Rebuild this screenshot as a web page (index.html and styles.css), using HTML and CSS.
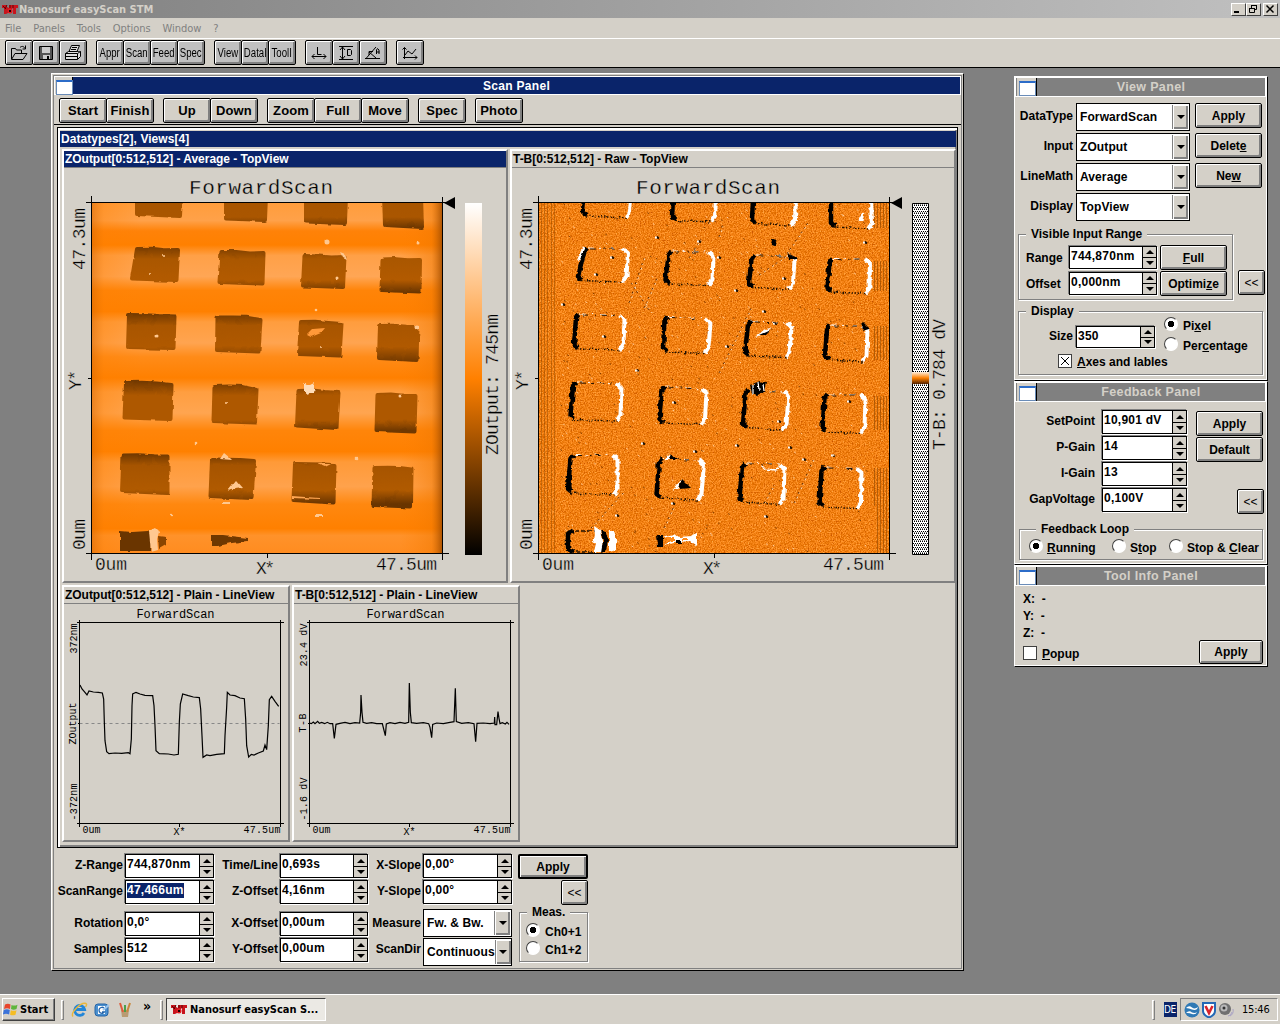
FILE: index.html
```html
<!DOCTYPE html>
<html lang="en">
<head>
<meta charset="utf-8">
<title>Nanosurf easyScan STM</title>
<link rel="stylesheet" href="styles.css">
</head>
<body>
<header class="titlebar">
  <svg class="logo" width="17" height="11" viewBox="0 0 17 11"><use href="#nst"/></svg>
  <span class="app-name">Nanosurf easyScan STM</span>
  <span class="winbtns">
    <i class="wb"><svg width="12" height="10"><path d="M2 8h5" stroke="#000" stroke-width="2"/></svg></i><i class="wb"><svg width="12" height="10"><path d="M4.500 4V1.500h5v4H8M2.500 4.500h5v4h-5zM4 1.500h6M2 4.500h6" fill="none" stroke="#000"/></svg></i><i class="wb close"><svg width="12" height="10"><path d="M2.500 1.500l7 7M9.500 1.500l-7 7" stroke="#000" stroke-width="1.500"/></svg></i>
  </span>
</header>
<nav class="menubar"><span>File</span><span>Panels</span><span>Tools</span><span>Options</span><span>Window</span><span>?</span></nav>
<div class="toolbar">
  <div class="tgroup">
    <button class="tb"><svg width="20" height="18" fill="none" stroke="#000"><path d="M2.500 15V4.500h4l1 1.500h5v3M2.500 15.500L6 9.500h12l-4 6zM11 3.500c2-2 4-1 5 1M16.500 1.500v3.500h-3"/></svg></button>
    <button class="tb"><svg width="20" height="18"><path d="M3.500 2.500h13v13h-13z" fill="#555" stroke="#000"/><path d="M6 3h8v6H6zM7 11h7v4H7z" fill="#ccc"/><path d="M11 12h2v3h-2z"/></svg></button>
    <button class="tb"><svg width="20" height="18" fill="#ddd" stroke="#000"><path d="M6 7.500L8.500 1.500h8L14 7.500M9 3.500h5M8 5.500h5"/><path d="M2.500 9.500l3-2h12v5l-3 3h-12z"/><path d="M2.500 9.500h12l3-2M14.500 9.500v6M3 12.500h11"/></svg></button>
  </div>
  <div class="tgroup"><button class="tb"><span>Appr</span></button><button class="tb"><span>Scan</span></button><button class="tb"><span>Feed</span></button><button class="tb"><span>Spec</span></button></div>
  <div class="tgroup"><button class="tb"><span>View</span></button><button class="tb"><span>DataI</span></button><button class="tb"><span>ToolI</span></button></div>
  <div class="tgroup">
    <button class="tb"><svg width="20" height="18" fill="none" stroke="#000"><path d="M8.500 3v7.500h4M3 12.500h5M12 12.500h5M5.500 10L3 12.500 5.500 15M14.500 10l2.500 2.500-2.500 2.500M8 12.500h5"/></svg></button>
    <button class="tb"><svg width="20" height="18" fill="none" stroke="#000"><path d="M3 2.500h14M3 15.500h14M6.500 3v12M4 6l2.500-3L9 6M4 12l2.500 3L9 12M11.500 5.500h3l1 1v4l-1 1h-3z"/></svg></button>
    <button class="tb"><svg width="20" height="18" fill="none" stroke="#000"><path d="M2 14.500h15M3 14.500L13 3M6 8l7 6M6 11V7.500h4M13.500 10V6l1-1.500 1.500 1.500v4M13.500 8h3"/></svg></button>
  </div>
  <div class="tgroup"><button class="tb"><svg width="20" height="18" fill="none" stroke="#000"><path d="M4.500 15V3.500M2.500 5.500l2-2 2 2M3 13.500h14M15 11.500l2 2-2 2M5 11l3-4 4 3 4-5"/></svg></button></div>
</div>

<main class="desktop">
  <section class="win scan-panel">
    <div class="wtitle active"><i class="sys"></i><span>Scan Panel</span></div>
    <div class="wtools">
      <div class="tgroup"><button class="sb">Start</button><button class="sb">Finish</button></div>
      <div class="tgroup"><button class="sb">Up</button><button class="sb">Down</button></div>
      <div class="tgroup"><button class="sb">Zoom</button><button class="sb">Full</button><button class="sb">Move</button></div>
      <div class="tgroup"><button class="sb">Spec</button></div>
      <div class="tgroup"><button class="sb">Photo</button></div>
    </div>
    <div class="datawin">
      <div class="dtitle">Datatypes[2], Views[4]</div>
      <div class="views">
        <article class="view">
          <h2 class="vhead active">ZOutput[0:512,512] - Average - TopView</h2>
          <svg class="plot big" viewBox="-28 -35 441 412" width="441" height="412">
            <defs>
              <linearGradient id="bands" gradientUnits="userSpaceOnUse" x1="0" y1="0" x2="0" y2="350">
                <stop offset="0" stop-color="#ff9d3c"/><stop offset=".05" stop-color="#ffa149"/><stop offset=".08" stop-color="#ff8208"/><stop offset=".12" stop-color="#ff8000"/><stop offset=".15" stop-color="#ffa047"/><stop offset=".21" stop-color="#ffa655"/><stop offset=".25" stop-color="#ff8408"/><stop offset=".31" stop-color="#ff8000"/><stop offset=".34" stop-color="#ff9d3e"/><stop offset=".4" stop-color="#ffa450"/><stop offset=".44" stop-color="#ff8b18"/><stop offset=".5" stop-color="#ff8000"/><stop offset=".54" stop-color="#ff9e40"/><stop offset=".6" stop-color="#ffa550"/><stop offset=".65" stop-color="#ff850a"/><stop offset=".71" stop-color="#ff8000"/><stop offset=".74" stop-color="#ff9a38"/><stop offset=".81" stop-color="#ffa24c"/><stop offset=".86" stop-color="#ff8810"/><stop offset=".93" stop-color="#ff8000"/><stop offset=".95" stop-color="#ff922a"/><stop offset="1" stop-color="#ff8c20"/>
              </linearGradient>
              <linearGradient id="pits" gradientUnits="userSpaceOnUse" x1="0" y1="0" x2="0" y2="350">
                <stop offset="0" stop-color="#a85500"/><stop offset=".04" stop-color="#aa5600"/><stop offset=".07" stop-color="#703800"/><stop offset=".13" stop-color="#804000"/><stop offset=".16" stop-color="#aa5700"/><stop offset=".22" stop-color="#b25a00"/><stop offset=".255" stop-color="#6c3600"/><stop offset=".315" stop-color="#703800"/><stop offset=".35" stop-color="#a85500"/><stop offset=".41" stop-color="#b05900"/><stop offset=".45" stop-color="#783c00"/><stop offset=".51" stop-color="#733900"/><stop offset=".55" stop-color="#ae5800"/><stop offset=".62" stop-color="#ae5800"/><stop offset=".65" stop-color="#703800"/><stop offset=".715" stop-color="#6e3700"/><stop offset=".75" stop-color="#a65400"/><stop offset=".82" stop-color="#b05a00"/><stop offset=".86" stop-color="#693400"/><stop offset="1" stop-color="#703800"/>
              </linearGradient>
              <linearGradient id="edge" x2="1" y2="0"><stop offset="0" stop-color="#d86800" stop-opacity=".55"/><stop offset=".035" stop-color="#ff8000" stop-opacity=".3"/><stop offset=".14" stop-color="#ff8000" stop-opacity="0"/><stop offset=".88" stop-color="#ff8000" stop-opacity="0"/><stop offset=".97" stop-color="#f07800" stop-opacity=".45"/><stop offset="1" stop-color="#a85000" stop-opacity=".9"/></linearGradient>
              <linearGradient id="scale" x2="0" y2="1"><stop offset="0" stop-color="#fff"/><stop offset=".5" stop-color="#ff8000"/><stop offset="1" stop-color="#000"/></linearGradient>
              <filter id="soft" x="-10%" y="-10%" width="120%" height="120%" color-interpolation-filters="sRGB"><feTurbulence type="fractalNoise" baseFrequency=".12" numOctaves="2" seed="3"/><feDisplacementMap in="SourceGraphic" scale="3" xChannelSelector="R" yChannelSelector="G"/><feGaussianBlur stdDeviation=".65"/></filter>
              <filter id="rough" x="-5%" y="-5%" width="110%" height="110%" color-interpolation-filters="sRGB"><feTurbulence type="fractalNoise" baseFrequency=".2" numOctaves="2" seed="4"/><feDisplacementMap in="SourceGraphic" scale="4" xChannelSelector="R" yChannelSelector="G"/></filter>
              <clipPath id="area"><path d="M0 0h350v350H0z"/></clipPath>
            </defs>
            <g clip-path="url(#area)">
              <path d="M0 0h350v350H0z" fill="url(#bands)"/>
              <path d="M0 0h350v350H0z" fill="url(#edge)"/>
              <g id="heightmap" filter="url(#soft)"></g>
              <g fill="#ffc890" filter="url(#soft)">
                <circle cx="235" cy="39" r="2.500"/><circle cx="326" cy="40" r="1.500"/><path d="M248 49l5 2 2 6-4-2z"/><path d="M215 132l6-6 12-1-4 5-10 4z" fill="#ff9838"/>
                <circle cx="325" cy="124" r="2.500"/><path d="M212 180l4 3 6-3-2 5 4 3-6 1-2 3-4-3z" fill="#ffdcb8"/><path d="M215 182h7v8h-7z" fill="#ffdcb8"/>
                <path d="M128 256l4-6 6 5 2 2zM135 288l9-11 7 8-8 1z"/><path d="M131 299h7v2h-7zM224 312h7v2h-7z"/><path d="M57 328l6-3 4 4-2 7 1 11-7 2z"/><path d="M225 261h14l-6 3zM200 293l27 2v1l-27-1z" fill="#ffa550"/>
                <circle cx="72" cy="53" r="1"/><circle cx="57" cy="71" r="1"/><circle cx="65" cy="133" r="1.500"/><circle cx="245" cy="75" r="1.500"/><circle cx="104" cy="240" r="1.300"/><circle cx="79" cy="312" r="1.300"/><circle cx="265" cy="256" r="1.300"/><circle cx="229" cy="144" r="1"/><circle cx="224" cy="107" r="1.300"/><circle cx="134" cy="200" r="1"/><circle cx="308" cy="193" r="1.500"/>
              </g>
            </g>
            <path d="M373 0h17v352h-17z" fill="url(#scale)"/>
            <g class="axes"><path d="M-6-.5h362.500M-.5-7v364M350.500-6v363M-6 350.500h363M175.500 350v5M-4 175.500h4"/></g>
            <path d="M352 0l11-6v12z"/>
            <g class="stroke-lg"><text x="97" y="-9" textLength="144" class="cap">ForwardScan</text><text x="3" y="367" textLength="32">0um</text><text x="164" y="371" textLength="19">X*</text><text x="284" y="367" textLength="61">47.5um</text><text transform="translate(-7 67) rotate(-90)" textLength="62">47.3um</text><text transform="translate(-7 347) rotate(-90)" textLength="31">0um</text><text transform="translate(-11 187) rotate(-90)" textLength="20">Y*</text><text transform="translate(406 252) rotate(-90)" textLength="141">ZOutput: 745nm</text></g>
          </svg>
        </article>
        <article class="view">
          <h2 class="vhead">T-B[0:512,512] - Raw - TopView</h2>
          <svg class="plot big" viewBox="-27 -35 441 412" width="441" height="412">
            <defs>
              <filter id="grain" x="0" y="0" width="100%" height="100%" color-interpolation-filters="sRGB"><feTurbulence type="fractalNoise" baseFrequency=".75" numOctaves="2" seed="9"/><feColorMatrix values=".45 0 0 0 .72  .5 0 0 0 .25  .6 0 0 0 -.23  0 0 0 0 1"/></filter>
              <pattern id="dots" width="4" height="4" patternUnits="userSpaceOnUse"><path d="M0 0h4v4H0z" fill="#fff"/><path d="M0 0h1v1H0zM2 0h1v1H2zM1 2h1v1H1zM3 2h1v1H3zM1 1h1v.5H1zM3 1h1v.5H3z"/></pattern>
              <linearGradient id="mid" x2="0" y2="1"><stop offset="0" stop-color="#fff0e0"/><stop offset=".5" stop-color="#ff8000"/><stop offset="1" stop-color="#502000"/></linearGradient>
            </defs>
            <g clip-path="url(#area)">
              <path d="M0 0h350v350H0z" filter="url(#grain)"/>
              <g stroke="#8a4600" stroke-opacity=".6"><path d="M2.500 0v350M5.500 0v350M8.500 0v350M12.500 0v350M15.500 0v350" stroke-opacity=".45"/><path d="M335.500 0v25M338.500 0v25M341.500 0v25M344.500 0v25M347.500 0v25M335.500 58v30M338.500 58v30M341.500 58v30M344.500 58v30M347.500 58v30M335.500 123v34M338.500 123v34M341.500 123v34M344.500 123v34M347.500 123v34M335.500 193v34M338.500 193v34M341.500 193v34M344.500 193v34M347.500 193v34M335.500 265v38M338.500 265v85M341.500 265v85M344.500 265v85M347.500 265v85"/></g>
              <g id="debris"></g>
              <g id="slopemap" filter="url(#rough)"></g>
            </g>
            <path d="M373.500.5h16v351h-16z" fill="url(#dots)" stroke="#000"/><path d="M373 169h17v12h-17z" fill="url(#mid)"/>
            <g class="axes"><path d="M-6-.5h362.500M-.5-7v364M350.500-6v363M-6 350.500h363M175.500 350v5M-4 175.500h4"/></g>
            <path d="M352 0l11-6v12z"/>
            <g class="stroke-lg"><text x="97" y="-9" textLength="144" class="cap">ForwardScan</text><text x="3" y="367" textLength="32">0um</text><text x="164" y="371" textLength="19">X*</text><text x="284" y="367" textLength="61">47.5um</text><text transform="translate(-7 67) rotate(-90)" textLength="62">47.3um</text><text transform="translate(-7 347) rotate(-90)" textLength="31">0um</text><text transform="translate(-11 187) rotate(-90)" textLength="20">Y*</text><text transform="translate(406 247) rotate(-90)" textLength="131">T-B: 0.784 dV</text></g>
          </svg>
        </article>
      </div>
      <div class="views lines">
        <article class="view small">
          <h2 class="vhead">ZOutput[0:512,512] - Plain - LineView</h2>
          <svg class="plot" viewBox="-15.5 -18.500 224 235" width="224" height="235">
            <path d="M0 101H200" stroke="#888" stroke-dasharray="3 3"/>
            <g class="axes"><path d="M-3 0H204M0-3V204M201-3V204M-3 201H204M100 201v3M-2 101h2"/></g>
            <polyline class="trace" transform="translate(-29.500 -43.500) scale(.33333)" points="90,318 96,330 103,338 111,348 117,336 130,339 145,340 157,342 161,360 163,430 165,485 170,518 177,524 195,522 215,523 235,521 240,524 244,480 246,380 248,345 258,340 270,345 285,349 308,350 312,380 315,440 318,515 328,524 355,525 372,528 385,526 388,430 391,375 398,345 415,350 430,354 448,356 452,390 456,470 459,535 470,528 480,530 500,526 523,524 525,470 530,385 532,340 540,348 555,350 570,357 583,359 587,420 590,500 596,534 604,526 612,528 625,522 640,516 645,498 650,512 655,440 658,362 665,352 675,367 686,382"/>
            <g class="stroke-sm"><text x="57" y="-5" textLength="78">ForwardScan</text><text x="3" y="210" textLength="18">0um</text><text x="94" y="212" textLength="12">X*</text><text x="164" y="210" textLength="37">47.5um</text><text transform="translate(-3 31) rotate(-90)" textLength="30">372nm</text><text transform="translate(-4 122) rotate(-90)" textLength="42">ZOutput</text><text transform="translate(-3 198) rotate(-90)" textLength="37">-372nm</text></g>
          </svg>
        </article>
        <article class="view small">
          <h2 class="vhead">T-B[0:512,512] - Plain - LineView</h2>
          <svg class="plot" viewBox="-15.5 -18.500 224 235" width="224" height="235">
            <g class="axes"><path d="M-3 0H204M0-3V204M201-3V204M-3 201H204M100 201v3M-2 101h2"/></g>
            <polyline class="trace" transform="translate(-259.500 -43.500) scale(.33333)" points="778,432 784,434 790,429 795,434 803,427 808,433 815,430 824,434 832,430 840,434 848,434 853,478 858,436 870,433 885,430 900,434 915,431 929,432 932,400 933,348 936,400 939,430 950,433 965,431 980,434 997,434 1001,450 1006,470 1009,435 1020,431 1035,434 1050,430 1065,433 1076,430 1078,312 1081,400 1084,431 1100,433 1120,431 1136,434 1140,445 1145,476 1148,436 1160,432 1180,434 1200,430 1212,428 1216,328 1219,428 1235,433 1255,431 1272,434 1277,488 1281,433 1300,432 1320,434 1333,432 1334,414 1335,437 1340,437 1344,398 1347,418 1350,434 1357,431 1366,435 1371,430 1377,436"/>
            <g class="stroke-sm"><text x="57" y="-5" textLength="78">ForwardScan</text><text x="3" y="210" textLength="18">0um</text><text x="94" y="212" textLength="12">X*</text><text x="164" y="210" textLength="37">47.5um</text><text transform="translate(-3 44) rotate(-90)" textLength="43">23.4 dV</text><text transform="translate(-4 110) rotate(-90)" textLength="19">T-B</text><text transform="translate(-3 198) rotate(-90)" textLength="43">-1.6 dV</text></g>
          </svg>
        </article>
      </div>
    </div>
    <form class="scan-form">
      <label>Z-Range</label><span class="field"><b>744,870nm</b><i class="spin"></i></span>
      <label>Time/Line</label><span class="field"><b>0,693s</b><i class="spin"></i></span>
      <label>X-Slope</label><span class="field"><b>0,00°</b><i class="spin"></i></span>
      <button type="button" class="pb default">Apply</button>
      <label>ScanRange</label><span class="field"><b><mark>47,466um</mark></b><i class="spin"></i></span>
      <label>Z-Offset</label><span class="field"><b>4,16nm</b><i class="spin"></i></span>
      <label>Y-Slope</label><span class="field"><b>0,00°</b><i class="spin"></i></span>
      <button type="button" class="pb less">&lt;&lt;</button>
      <label>Rotation</label><span class="field"><b>0,0°</b><i class="spin"></i></span>
      <label>X-Offset</label><span class="field"><b>0,00um</b><i class="spin"></i></span>
      <label>Measure</label><span class="combo raised"><b>Fw. &amp; Bw.</b><i></i></span>
      <fieldset class="meas"><legend>Meas.</legend><span class="radio on">Ch0+1</span><span class="radio">Ch1+2</span></fieldset>
      <label>Samples</label><span class="field"><b>512</b><i class="spin"></i></span>
      <label>Y-Offset</label><span class="field"><b>0,00um</b><i class="spin"></i></span>
      <label>ScanDir</label><span class="combo"><b>Continuous</b><i></i></span>
    </form>
  </section>

  <section class="win side view-panel">
    <div class="wtitle"><i class="sys"></i><span>View Panel</span></div>
    <div class="vp-grid">
      <label>DataType</label><span class="combo"><b>ForwardScan</b><i></i></span><button class="pb">Apply</button>
      <label>Input</label><span class="combo"><b>ZOutput</b><i></i></span><button class="pb">Delet<u>e</u></button>
      <label>LineMath</label><span class="combo"><b>Average</b><i></i></span><button class="pb">Ne<u>w</u></button>
      <label>Display</label><span class="combo"><b>TopView</b><i></i></span>
    </div>
    <div class="vp-range">
      <fieldset class="range"><legend>Visible Input Range</legend>
        <label>Range</label><span class="field"><b>744,870nm</b><i class="spin"></i></span><button class="pb"><u>F</u>ull</button>
        <label>Offset</label><span class="field"><b>0,000nm</b><i class="spin"></i></span><button class="pb">Optimi<u>z</u>e</button>
      </fieldset>
      <button class="pb less">&lt;&lt;</button>
    </div>
    <fieldset class="disp"><legend>Display</legend>
      <label>Size</label><span class="field"><b>350</b><i class="spin"></i></span>
      <div class="radios"><span class="radio on">Pi<u>x</u>el</span><span class="radio">Per<u>c</u>entage</span></div>
      <span class="check on"><u>A</u>xes and lables</span>
    </fieldset>
  </section>

  <section class="win side feedback-panel">
    <div class="wtitle"><i class="sys"></i><span>Feedback Panel</span></div>
    <div class="fb-grid">
      <label>SetPoint</label><span class="field"><b>10,901 dV</b><i class="spin"></i></span><button class="pb">Apply</button>
      <label>P-Gain</label><span class="field"><b>14</b><i class="spin"></i></span><button class="pb">Default</button>
      <label>I-Gain</label><span class="field"><b>13</b><i class="spin"></i></span><span></span>
      <label>GapVoltage</label><span class="field"><b>0,100V</b><i class="spin"></i></span><button class="pb less">&lt;&lt;</button>
    </div>
    <fieldset class="loop"><legend>Feedback Loop</legend><span class="radio on"><u>R</u>unning</span><span class="radio">S<u>t</u>op</span><span class="radio">Stop &amp; <u>C</u>lear</span></fieldset>
  </section>

  <section class="win side tool-panel">
    <div class="wtitle"><i class="sys"></i><span>Tool Info Panel</span></div>
    <div class="ti">
      <div class="coords"><div>X:&nbsp; -</div><div>Y:&nbsp; -</div><div>Z:&nbsp; -</div></div>
      <div class="ti-foot"><span class="check"><u>P</u>opup</span><button class="pb">Apply</button></div>
    </div>
  </section>
</main>

<footer class="taskbar">
  <button class="start"><svg width="16" height="15" viewBox="0 0 16 15"><path d="M2 2.500q3-1.500 5.500 0L7 7Q4 5.500 1 7z" fill="#e8452c"/><path d="M8.500 3q3 1.300 6-.3L13.500 7q-3 1.300-5.500 0z" fill="#5db53c"/><path d="M.8 8Q4 6.500 6.800 8l-.7 4.500Q3 11-.1 12.500z" fill="#3b73d9"/><path d="M7.800 8.200q3 1.300 5.700 0l-1 4.500q-3 1.300-5.400 0z" fill="#f5bd24"/></svg>Start</button>
  <i class="sep"></i>
  <div class="quick">
    <svg width="17" height="16" viewBox="0 0 17 16"><path d="M13 11a5 5 0 1 1 .6-3.500H4" fill="none" stroke="#2386d8" stroke-width="2.800"/><path d="M2 14.500C-1 11 10-.5 15 1.500c1.500 1 0 2.500-.5 3.500" fill="none" stroke="#e9b63a" stroke-width="1.400"/></svg>
    <svg width="17" height="16" viewBox="0 0 17 16"><rect x="1" y="2" width="13" height="12" rx="3" fill="#4b90cf" stroke="#2564a8"/><path d="M4 4h7v8H4z" fill="#fff"/><path d="M10 6a3 3 0 1 0 .5 4H8" fill="none" stroke="#2465ac" stroke-width="1.300"/><path d="M9 8l6-5" stroke="#9cc6ee" stroke-width="2"/></svg>
    <svg width="17" height="16" viewBox="0 0 17 16"><path d="M4 8h8l-1 7H5z" fill="#b99b72"/><path d="M3 1l3 9" stroke="#e05a3a" stroke-width="2"/><path d="M8 3v7" stroke="#4aa04a" stroke-width="2"/><path d="M13 1l-3 9" stroke="#c9873c" stroke-width="2"/></svg>
  </div>
  <span class="more">»</span>
  <i class="sep s2"></i>
  <div class="task"><svg width="17" height="11" viewBox="0 0 17 11"><use href="#nst"/></svg>Nanosurf easyScan S...</div>
  <i class="sep s3"></i>
  <span class="lang">DE</span>
  <div class="tray">
    <svg width="16" height="16"><circle cx="8" cy="8" r="7.500" fill="#2f79b5"/><path d="M2 6q3-3 6-.5 3 2 6-.5-1 4-6 2.500Q5 6 2 6zM2 11q3-3 6-.5 3 1 5-.5-1 3-5 2-3-1.500-6-1z" fill="#fff"/></svg>
    <svg width="14" height="16"><path d="M1 1h12v8q0 4-6 6.500Q1 13 1 9z" fill="#fff" stroke="#2468b5" stroke-width="2"/><path d="M3.500 4L7 11l3.500-7" fill="none" stroke="#d8242c" stroke-width="2.600"/></svg>
    <svg width="17" height="16"><circle cx="7" cy="7" r="6" fill="#707070"/><circle cx="6" cy="6" r="3.500" fill="#b8b8b8"/><circle cx="6" cy="6" r="1.500" fill="#333"/><path d="M12 14q4-2 3-7M10 14q3 0 4-4" fill="none" stroke="#a9a3c4"/></svg>
    <span>15:46</span>
  </div>
</footer>
<svg class="defs" width="0" height="0"><defs><g id="nst"><path d="M0 1h5v2l2 1V1h9v3h-2v6h-3V4l-2 2v3H6L4 10H2V4H0z" fill="#c8141c"/><path d="M1 2l3 3M5 1l-2 4M11 1v3M8 1v3" stroke="#400" stroke-width=".8"/><circle cx="8" cy="7" r="2.500" fill="#e01c22"/><path d="M7 6h2v2H7z" fill="#200"/></g></defs></svg>
<script src="scans.js"></script>
</body>
</html>
```
FILE: styles.css
```css
* { box-sizing: border-box; }
body { margin: 0; width: 1280px; height: 1024px; overflow: hidden; display: flex; flex-direction: column; background: #808080; color: #000; font: bold 12px "Liberation Sans", Arial, sans-serif; }
button { font: inherit; color: inherit; padding: 0; margin: 0; border-radius: 0; white-space: nowrap; }
i { font-style: normal; display: block; flex: none; }
u { text-underline-offset: 1px; }
fieldset { margin: 0; padding: 0; min-width: 0; border: 1px solid #808080; box-shadow: 1px 1px #fff, inset 1px 1px #fff; }
legend { padding: 0 5px; margin-left: 7px; line-height: 13px; background: #d4d0c8; }
.defs { position: absolute; }

/* application frame */
.titlebar { height: 18px; flex: none; display: flex; align-items: center; padding: 0 2px; background: linear-gradient(90deg, #808080, #c0c0c0); }
.app-name { font: bold 11px "DejaVu Sans Condensed", "DejaVu Sans", sans-serif; color: #d4d0c8; letter-spacing: .02px; }
.winbtns { margin-left: auto; display: flex; }
.wb { width: 15px; height: 13px; background: #d4d0c8; border: 1px solid; border-color: #fff #404040 #404040 #fff; }
.wb svg { display: block; }
.wb.close { margin-left: 2px; }
.menubar { height: 20px; flex: none; display: flex; gap: 12px; padding: 0 5px; align-items: center; background: #d4d0c8; color: #808080; font: 11px "DejaVu Sans Condensed", "DejaVu Sans", sans-serif; letter-spacing: -.05px; }
.toolbar { height: 30px; flex: none; display: flex; gap: 9px; padding: 1px 5px 0; background: #d4d0c8; border-top: 1px solid #fff; border-bottom: 1px solid #000; }
.tgroup { display: flex; }
.tb { width: 28px; height: 25px; margin-right: -1px; display: grid; place-items: center; background: #c0c0c0; border: 1px solid #000; box-shadow: inset 1px 1px #fff, inset -2px -2px #808080; font: 12px "Liberation Sans", sans-serif; border-radius: 2px; }
.tb span { transform: scaleX(.8); margin: 0 -4px; letter-spacing: 0; }
.tb:last-child, .sb:last-child { margin-right: 0; }

/* windows */
.desktop { position: relative; flex: 1; }
.win { position: absolute; background: #d4d0c8; display: flex; flex-direction: column; }
.scan-panel { left: 51px; top: 5px; width: 913px; height: 898px; border: 1px solid; border-color: #fff #000 #000 #fff; box-shadow: inset 1px 1px #d4d0c8, inset -1px -1px #d4d0c8, inset 2px 2px #808080, inset -2px -2px #808080; padding: 2px; }
.wtitle { display: flex; flex: none; height: 20px; border: 1px solid #fff; background: #808080; color: #d4d0c8; font-size: 12.500px; letter-spacing: .35px; align-items: center; }
.wtitle span { flex: 1; text-align: center; }
.wtitle.active { height: 19px; background: #0a246a; color: #fff; font-size: 12px; letter-spacing: .3px; }
.sys { width: 18px; align-self: stretch; background: #d4d0c8; border-right: 1px solid #000; padding: 3px 1px 1px 1px; }
.sys::before { content: ""; display: block; width: 15px; height: 12px; background: #fff; border: 1px solid #6a8cb8; border-top: 2px solid #2c6cc8; }
.wtools { height: 30px; flex: none; display: flex; gap: 9px; padding: 3px 5px 0; border-bottom: 1px solid #000; }
.sb { width: 48px; height: 25px; margin-right: -1px; background: #d4d0c8; border: 1px solid #000; box-shadow: inset 1px 1px #fff, inset -2px -2px #808080; font-size: 13px; letter-spacing: .1px; border-radius: 2px; }
.datawin { margin: 2px 3px 0; height: 721px; flex: none; border: 1px solid #000; box-shadow: inset 2px 2px #fff, inset -2px -2px #808080; padding: 3px 1px 3px 2px; }
.dtitle { height: 16px; line-height: 16px; background: #0a246a; color: #fff; padding-left: 1px; letter-spacing: .05px; }
.views { display: flex; gap: 2px; padding: 2px 0 0 2px; }
.view { width: 446px; height: 434px; background: #d4d0c8; border: 2px solid; border-color: #fff #808080 #808080 #fff; }
.lines .view { width: 228px; height: 257px; }
.lines { padding-top: 2px; }
.vhead { margin: 0; height: 17px; line-height: 16px; font-size: 12px; padding-left: 1px; border-bottom: 1px solid #808080; white-space: nowrap; letter-spacing: -.03px; }
.vhead.active { background: #0a246a; color: #fff; }
.plot { display: block; }
.axes { stroke: #000; fill: none; shape-rendering: crispEdges; }
.trace { fill: none; stroke: #000; stroke-width: 1.200px; vector-effect: non-scaling-stroke; }
.stroke-lg { font: 18px "Liberation Mono", monospace; }
.stroke-lg text, .stroke-sm text { white-space: pre; }
.stroke-lg .cap { font-size: 21px; }
.stroke-lg text { stroke: #d4d0c8; stroke-width: .3px; }
.stroke-sm { font: 10px "Liberation Mono", monospace; }
.stroke-sm text:first-child { font-size: 12px; }

/* controls */
label { text-align: right; padding-right: 3px; line-height: 23px; white-space: nowrap; display: flex; justify-content: flex-end; }
.field { display: flex; height: 24px; background: #fff; border: 1px solid #000; box-shadow: -1px -1px #808080, 1px 1px #fff; }
.field b { flex: 1; padding: 2px 0 0 1px; line-height: 15px; white-space: nowrap; letter-spacing: .25px; }
mark { background: #0a246a; color: #fff; display: inline-block; }
.spin { width: 14px; border-left: 1px solid #000; background: linear-gradient(#000, #000) center / 100% 1px no-repeat, #d4d0c8; display: flex; flex-direction: column; justify-content: space-around; align-items: center; }
.spin::before, .spin::after { content: ""; border: 4px solid transparent; border-top: 0; border-bottom: 4px solid #000; }
.spin::after { border-bottom: 0; border-top: 4px solid #000; }
.combo { display: flex; height: 28px; background: #fff; border: 1px solid #000; padding: 1px; }
.combo b { flex: 1; padding-left: 2px; line-height: 25px; white-space: nowrap; letter-spacing: .1px; }
.combo i { width: 16px; background: #d4d0c8; box-shadow: inset 1px 1px #fff, inset -2px -2px #808080; border-left: 1px solid #808080; display: grid; place-items: center; }
.combo i::before { content: ""; border: 4px solid transparent; border-bottom: 0; border-top-color: #000; }
.pb { height: 25px; background: #d4d0c8; border: 1px solid #000; border-radius: 2px; box-shadow: inset 1px 1px #fff, inset -2px -2px #808080; }
.pb.default { border-width: 2px; }
.pb.less { width: 27px; justify-self: end; font-weight: normal; }
.radio, .check { display: block; line-height: 14px; height: 14px; white-space: nowrap; }
.radio::before { content: ""; display: inline-block; vertical-align: -1px; margin-right: 5px; width: 12px; height: 12px; border-radius: 50%; border: 1px solid; border-color: #404040 #fff #fff #404040; background: #fff; }
.radio.on::before { background: radial-gradient(circle, #000 3px, #fff 3.500px); }
.check::before { content: ""; display: inline-block; vertical-align: -2px; margin-right: 5px; width: 12px; height: 12px; background: #fff; border: 1px solid #404040; }
.check.on::before { background: linear-gradient(45deg, transparent 44%, #000 44% 56%, transparent 56%) center / 8px 8px no-repeat, linear-gradient(-45deg, transparent 44%, #000 44% 56%, transparent 56%) center / 8px 8px no-repeat, #fff; }

.scan-form { display: grid; grid-template-columns: 71px 89px 66px 88px 55px 89px 76px; grid-template-rows: 26px 32px 26px 28px; padding-top: 6px; }
.scan-form label { padding-right: 2px; }
.scan-form .pb { justify-self: end; }
.scan-form .pb.default { width: 70px; }
.scan-form .combo.raised { margin-top: -3px; }
.meas { grid-column: 7; grid-row: 3 / 5; margin: -6px 0 4px 7px; display: flex; flex-direction: column; gap: 4px; padding-top: 4px; }
.meas .radio { margin-left: 6px; }

.side { left: 1014px; width: 254px; border: 1px solid; border-color: #fff #000 #000 #fff; box-shadow: inset -1px -1px #fff; padding-right: 1px; }
.side .wtitle { padding-left: 1px; }
.side .sys { width: 20px; padding-left: 2px; }
.view-panel { top: 8px; height: 305px; }
.vp-grid { display: grid; grid-template-columns: 61px 114px 67px; column-gap: 0; grid-template-rows: 30px 30px 30px 28px; margin-top: 6px; }
.vp-grid .pb { margin-left: 5px; width: 67px; }
.vp-grid label { line-height: 26px; }
.vp-range { display: flex; align-items: flex-end; margin: 7px 0 0 3px; gap: 5px; }
.range { width: 215px; height: 72px; display: grid; grid-template-columns: 50px 88px 68px; grid-template-rows: 26px 26px; align-content: start; padding-top: 4px; }
.range .field { height: 23px; margin-top: 1px; }
.range label { justify-content: flex-start; padding: 2px 0 0 7px; }
.range .pb { margin-left: 3px; width: 67px; }
.vp-range .less { margin-bottom: 5px; }
.disp { width: 245px; height: 70px; margin: 5px 0 0 3px; display: grid; grid-template-columns: 57px 79px 1fr; grid-template-rows: 29px 20px; padding-top: 7px; }
.disp .field { height: 22px; margin-top: 1px; }
.radios { margin: -8px 0 0 9px; display: flex; flex-direction: column; gap: 6px; }
.disp .check { grid-column: 1 / 4; margin-left: 39px; }
.feedback-panel { top: 313px; height: 184px; }
.fb-grid { display: grid; grid-template-columns: 87px 85px 77px; grid-template-rows: 26px 26px 26px 26px; margin-top: 8px; }
.fb-grid label { padding-right: 7px; }
.fb-grid .pb { width: 67px; justify-self: end; margin: 1px 1px 0 0; }
.fb-grid .pb.less { width: 27px; margin-right: 0; }
.loop { margin: 9px 0 0 4px; width: 244px; height: 37px; display: flex; padding: 3px 0 0 9px; align-items: flex-start; }
.loop .radio:nth-of-type(1) { width: 83px; }
.loop .radio:nth-of-type(2) { width: 57px; }
.loop .radio::before { margin-right: 4px; }
.tool-panel { top: 497px; height: 102px; }
.ti { padding: 5px 3px 0 8px; }
.coords div { line-height: 17px; }
.ti-foot { display: flex; justify-content: space-between; align-items: flex-start; margin-top: -2px; }
.ti-foot .check { margin-top: 6px; }
.ti-foot .pb { width: 64px; height: 24px; }

/* taskbar */
.taskbar { height: 30px; flex: none; display: flex; align-items: center; background: #d4d0c8; border-top: 1px solid #fff; padding: 0 2px 0; font: 11px "DejaVu Sans Condensed", "DejaVu Sans", sans-serif; }
.start { width: 53px; height: 23px; display: flex; align-items: center; gap: 1px; background: #d4d0c8; border: 1px solid; border-color: #fff #404040 #404040 #fff; box-shadow: inset -1px -1px #808080; font-weight: bold; letter-spacing: 0; }
.sep { width: 3px; height: 20px; margin-left: 6px; border: 1px solid; border-color: #fff #808080 #808080 #fff; }
.quick { display: flex; gap: 6px; margin-left: 7px; }
.more { width: 14px; margin-left: 9px; margin-top: -8px; font-size: 14px; font-weight: bold; }
.s2 { margin-left: 3px; }
.task { margin-left: 3px; width: 160px; height: 23px; display: flex; align-items: center; gap: 2px; padding-left: 4px; font-weight: bold; letter-spacing: -.02px; background: #ebe9e4; border: 1px solid; border-color: #404040 #fff #fff #404040; white-space: nowrap; }
.s3 { margin-left: auto; }
.lang { width: 13px; margin: 0 3px 0 9px; line-height: 15px; overflow: hidden; background: #0a246a; color: #fff; font-size: 10px; letter-spacing: -.5px; }
.tray { display: flex; align-items: center; gap: 2px; height: 23px; width: 98px; padding-left: 3px; border: 1px solid; border-color: #808080 #fff #fff #808080; }
.tray span { margin-left: 5px; letter-spacing: -.2px; }
```
FILE: scans.js
```js
// Pit outlines on the 350 px scan area: top-left, top-right, bottom-right, bottom-left.
const pits = [
  [44,-8,90,-8,89,14,44,12],[133,-8,175,-8,174,18,133,16.500],[213,-8,255,-8,254,21,213,19.500],[291,-8,330,-8,331,25,292,23],
  [44,45,87,46,85.5,78,39,76.5],[128.5,48,172.5,49,171.5,81.5,126.5,80],[211.5,52,253.5,53,252,85,210,83.5],[289.5,55.5,329,56,328.5,89.5,288.5,88],
  [36,111,83.5,112.5,82.5,146,35,145],[124.5,113.5,169.5,116,167.5,149.5,124,148],[208,118,250.5,120,248.5,153.5,206,152],[287,122,326.5,123,325.5,158,286,156],
  [33,179,80.5,181,79.5,217,31.5,215.5],[121.5,183,165.5,186,164,220.5,120.5,219],[205.5,187,247.5,189,245.5,226,204,223.5],[284.5,191,324.5,192,323.5,229.5,283.5,228],
  [30.5,251.5,76.5,252.5,76.5,291,29,289],[119,255.5,163,257,160.5,296,117.5,294],[202,260,243.5,261,242.5,300.5,200.5,298],[281.5,264,320.5,265.5,320,304.5,280.5,303]
];
let state = 77;
const rnd = () => (state = (state * 16807) % 2147483647) / 2147483647;
const path = (d, attrs) => `<path d="${d}" ${attrs}/>`;

let height = "", slope = "";
for (const [a, b, c, d, e, f, g, h] of pits) {
  const w1 = (c - a) / 3;
  height += path(`M${a + 1} ${b + 1}l${w1} ${rnd() - .5}l${w1 - 1} ${rnd() * 1.5}L${c - 1} ${d + 1}L${e - 1} ${f - 1}L${g + 1} ${h - 1}z`,
    'fill="url(#pits)" stroke="url(#pits)" stroke-width="4" stroke-linejoin="round"');
  slope += path(`M${a + 4} ${b}L${a + 1} ${b + 4}L${g} ${h - 3}L${g + 4} ${h}`, 'fill="none" stroke="#000" stroke-width="4.500" stroke-linejoin="round"');
  slope += path(`M${c - 3} ${d}L${c + 2} ${d + 4}L${e + 2} ${f - 5}L${e - 2} ${f + 1}`, 'fill="none" stroke="#fff" stroke-width="4" stroke-linejoin="round"');
  slope += path(`M${g + 3} ${h + 1}L${e - 2} ${f + 1}`, 'stroke="#201000" stroke-width="1.500" stroke-dasharray="1.500 1.500"');
  slope += path(`M${a + 5} ${b}L${c - 3} ${d}`, 'stroke="#fff" stroke-width="1" stroke-dasharray="6 5 2 7"');
  slope += path(`M${a + 8} ${b + 1}L${c - 8} ${d}`, 'stroke="#201000" stroke-width="1" stroke-dasharray="5 7 2 4"');
}
height += path("M28 328l12 1 16-1 4 6-2 14-30 0z", 'fill="#6a3500"') + path("M66 333l8 1v8l-7 4z", 'fill="#8a4500"')
  + path("M120 332h11l25 3v3l-16 2-14 3h-6z", 'fill="#703800"');
slope += path("M35 328l-6 2v16l6 3", 'fill="none" stroke="#000" stroke-width="4.500"')
  + path("M37 328h20M37 349h20", 'stroke="#201000" stroke-width="1.500" stroke-dasharray="4 2"')
  + path("M55 323l6 4 4 22h-10l2-9h-3l2-8z M70 328h5l2 6v13l-7 2z", 'fill="#fff"')
  + path("M61 327l6 2 2 8-2 11-5 2 2-12zM118 332h6v12h-5z", 'fill="#000"')
  + path("M126 333l10-2 4 3 12-1 6-4v14l-6-5-12 1-15 3 6-4z", 'fill="#fff"')
  + path("M128 334h8v4h-8zM144 335h5v2h-5z", 'fill="#ff8a18"')
  + path("M137 337h6v3h-6z", 'fill="#000"')
  + path("M211 182l10-4 6 2-2 9-7 4-5-2z", 'fill="#000"') + path("M214 192v-11M219 179l1 8M224 181l1 7", 'stroke="#fff" stroke-width="1.200"')
  + path("M133 288l10-12-3 9z", 'fill="#fff"') + path("M143 276l9 9-12 1z", 'fill="#000"')
  + path("M126 257l4-7 3 7z", 'fill="#fff"') + path("M130 250l8 7h-6z", 'fill="#000"')
  + path("M216 134l10-8 7-1-6 6z", 'fill="#fff"') + path("M221 132l11-5-5 5z", 'fill="#000"')
  + path("M39 58l6-14", 'stroke="#fff" stroke-width="2.500"') + path("M42 60l5-15", 'stroke="#000" stroke-width="2.500"')
  + path("M234 37l3 1-1 4-3-1z", 'stroke="#000" stroke-width="2"') + path("M250 52l6 3-5 1z", 'stroke="#000" stroke-width="2"')
  + path("M325 122l3 3-3 1z", 'stroke="#000" stroke-width="3"') + path("M324 10l-2 8", 'stroke="#fff" stroke-width="3"')
  + path("M221 262l4 4 12 1 6-3", 'fill="none" stroke="#fff" stroke-width="1.500"');

const specks = [[326,39],[24,101],[197,87],[225,108],[212,118],[98,167],[104,240],[135,199],[156,248],[78,312],[265,256],[227,313],[198,242],[251,244],[65,133],[73,54],[245,75],[188,143],[57,71],[134,300],[160,38],[236,120],[240,218],[118,34],[180,54],[294,252],[310,198]];
let debris = "";
for (const [x, y] of specks) {
  debris += path(`M${x - 2} ${y + .5}h2.500`, 'stroke="#fff" stroke-width="2"') + path(`M${x} ${y - .5}l2 1-1 1.500z`, 'stroke="#201000" stroke-width="1"');
}
for (let i = 0; i < 330; i++) {
  const x = 20 + rnd() * 310, y = rnd() * 350;
  debris += path(`M${x.toFixed(1)} ${y.toFixed(1)}l1.500 1`, `stroke="${rnd() < .5 ? "#803c00" : "#ffd0a0"}"`);
}
const scratches = [[90,100,105,55],[105,105,118,75],[180,170,212,105],[245,55,270,18],[255,300,275,255],[225,300,235,282],[125,325,135,303],[52,325,84,290],[220,72,245,55],[150,55,162,36],[92,80,112,110],[180,34,184,20]];
for (const [x1, y1, x2, y2] of scratches) {
  debris += path(`M${x1} ${y1}L${x2} ${y2}`, 'stroke="#5a2800" stroke-dasharray="2 4 1 3"') + path(`M${x1 + 1} ${y1}L${x2 + 1} ${y2}`, 'stroke="#ffd8b0" stroke-dasharray="1 4 2 3"');
}
document.getElementById("heightmap").innerHTML = height;
document.getElementById("slopemap").innerHTML = slope;
document.getElementById("debris").innerHTML = debris;
```
